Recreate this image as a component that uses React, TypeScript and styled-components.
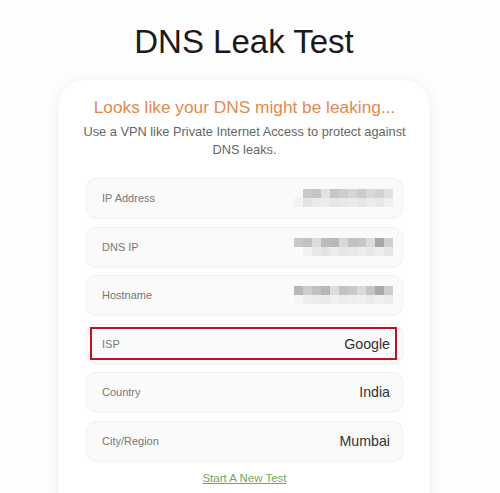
import React from 'react'
import styled, { createGlobalStyle } from 'styled-components'

const Global = createGlobalStyle`
  html, body {
    margin: 0;
    padding: 0;
    background: #fefefe;
    font-family: Arial, "Liberation Sans", sans-serif;
    overflow: hidden;
  }
`

const Page = styled.div`
  width: 500px;
  height: 493px;
  overflow: hidden;
  padding-top: 24px;
  box-sizing: border-box;
`

const Title = styled.h1`
  margin: 0 0 0 58px;
  width: 372px;
  text-align: center;
  font-size: 33px;
  font-weight: 400;
  color: #1a1a1a;
  line-height: 36px;
`

const Card = styled.div`
  margin: 20px 0 0 58px;
  width: 372px;
  box-sizing: border-box;
  padding: 16px 27px 40px 28px;
  background: #fff;
  border-radius: 28px;
  box-shadow: 0 2px 18px rgba(0, 0, 0, 0.07);
`

const Heading = styled.h2`
  margin: 0;
  text-align: center;
  font-size: 17.3px;
  font-weight: 400;
  color: #e3894e;
  line-height: 22px;
`

const Sub = styled.p`
  margin: 5px -6px 0;
  text-align: center;
  font-size: 12.8px;
  color: #666;
  line-height: 18px;
`

const List = styled.div`
  margin-top: 19px;
  display: flex;
  flex-direction: column;
  gap: 8.6px;
`

const Row = styled.div`
  position: relative;
  height: 40px;
  box-sizing: border-box;
  padding: 0 12px 0 15px;
  display: flex;
  align-items: center;
  justify-content: space-between;
  background: #fafafa;
  border: 1px solid #f1f1f1;
  border-radius: 10px;
  box-shadow: 0 1px 3px rgba(0, 0, 0, 0.04);
`

const Mark = styled.div`
  position: absolute;
  left: 3px;
  right: 5px;
  top: 2px;
  bottom: 3px;
  border: 2px solid #c0121b;
`

const Label = styled.span`
  font-size: 11px;
  color: #777;
`

const Value = styled.span`
  font-size: 14.2px;
  color: #333;
`

const Pixels = styled.div`
  display: grid;
  grid-template-columns: repeat(11, 9px);
  grid-auto-rows: 9px;
  margin-right: -3px;
`

const Cell = styled.div<{ $c: string }>`
  background: ${p => p.$c};
`

const LinkRow = styled.div`
  margin-top: 7px;
  text-align: center;
`

const NewTest = styled.a`
  font-size: 11.5px;
  color: #72a85a;
  text-decoration: underline;
`

const blurA = [
  '#fafafa', '#c9c9c9', '#c4c4c4', '#e2e2e2', '#c6c6c6', '#cdcdcd', '#d6d6d6', '#cbcbcb', '#d9d9d9', '#d2d2d2', '#e0e0e0',
  '#f2f2f2', '#e4e4e4', '#e9e9e9', '#ececec', '#e6e6e6', '#e8e8e8', '#ebebeb', '#e6e6e6', '#ececec', '#e8e8e8', '#f0f0f0',
]
const blurB = [
  '#c8c8c8', '#c2c2c2', '#dcdcdc', '#bcbcbc', '#b8b8b8', '#d8d8d8', '#c2c2c2', '#c6c6c6', '#dcdcdc', '#a8a8a8', '#cfcfcf',
  '#fafafa', '#f2f2f2', '#e8e8e8', '#e4e4e4', '#ececec', '#e6e6e6', '#e9e9e9', '#ededed', '#e8e8e8', '#eeeeee', '#e6e6e6',
]
const blurC = [
  '#b8b8b8', '#cdcdcd', '#c0c0c0', '#b6b6b6', '#dddddd', '#c3c3c3', '#c9c9c9', '#dadada', '#c5c5c5', '#a9a9a9', '#cdcdcd',
  '#f6f6f6', '#eeeeee', '#ebebeb', '#e9e9e9', '#f0f0f0', '#ececec', '#eeeeee', '#f0f0f0', '#ebebeb', '#f0f0f0', '#ebebeb',
]

function Blur({ cells }: { cells: string[] }) {
  return (
    <Pixels>
      {cells.map((c, i) => <Cell key={i} $c={c} />)}
    </Pixels>
  )
}

const rows: { label: string; value?: string; blur?: string[]; marked?: boolean }[] = [
  { label: 'IP Address', blur: blurA },
  { label: 'DNS IP', blur: blurB },
  { label: 'Hostname', blur: blurC },
  { label: 'ISP', value: 'Google', marked: true },
  { label: 'Country', value: 'India' },
  { label: 'City/Region', value: 'Mumbai' },
]

export default function App() {
  return (
    <Page>
      <Global />
      <Title>DNS Leak Test</Title>
      <Card>
        <Heading>Looks like your DNS might be leaking...</Heading>
        <Sub>Use a VPN like Private Internet Access to protect against DNS leaks.</Sub>
        <List>
          {rows.map(r => (
            <Row key={r.label}>
              <Label>{r.label}</Label>
              {r.blur ? <Blur cells={r.blur} /> : <Value>{r.value}</Value>}
              {r.marked && <Mark />}
            </Row>
          ))}
        </List>
        <LinkRow>
          <NewTest href="#">Start A New Test</NewTest>
        </LinkRow>
      </Card>
    </Page>
  )
}
